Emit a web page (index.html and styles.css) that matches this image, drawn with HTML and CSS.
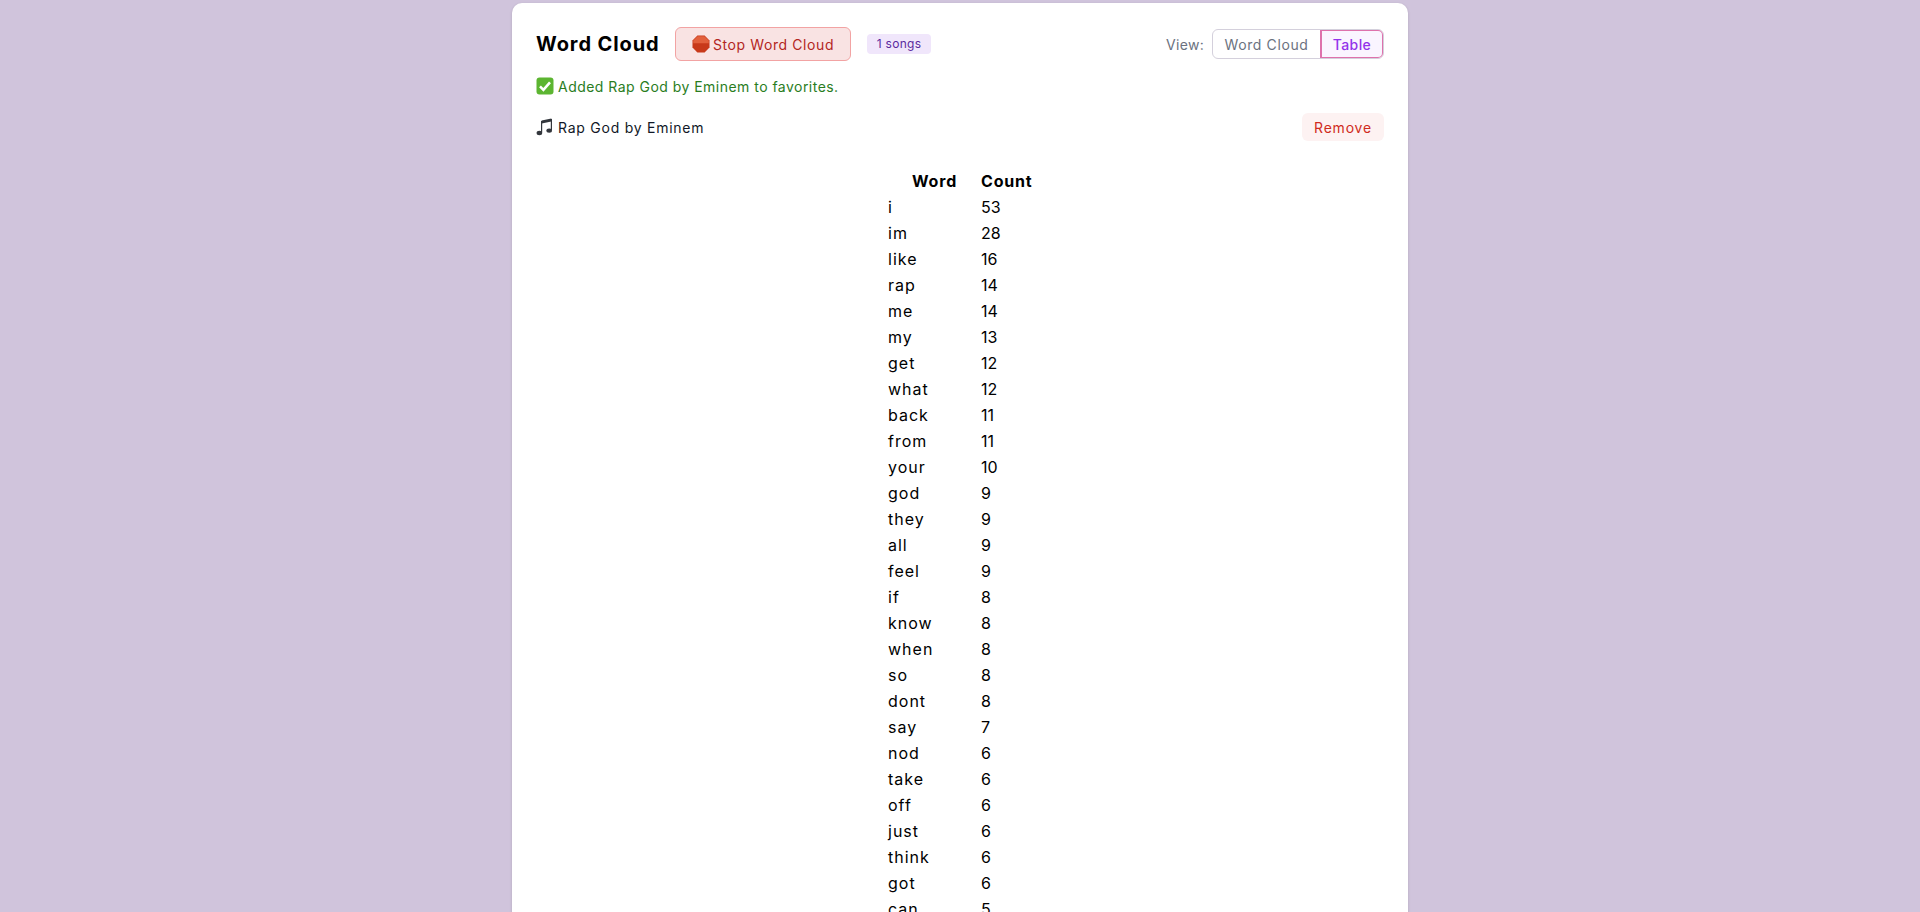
FILE: index.html
```html
<!DOCTYPE html>
<html lang="en">
<head>
    <meta charset="UTF-8">
    <meta name="viewport" content="width=device-width, initial-scale=1.0">
    <title>Word Cloud</title>
    <link rel="stylesheet" href="styles.css">
</head>
<body>
    <div class="card">
        <div class="header">
            <h2>Word Cloud</h2>
            <button class="stop-btn">
                <svg class="icon" viewBox="0 0 18 18" width="18" height="18" aria-hidden="true">
                    <polygon points="5.4,0.5 12.6,0.5 17.5,5.4 17.5,12.6 12.6,17.5 5.4,17.5 0.5,12.6 0.5,5.4" fill="#c8391a"/>
                    <path d="M5.6 1.2h6.8l4.4 4.4v2.6H1.2V5.6z" fill="#e2603c"/>
                </svg>
                Stop Word Cloud
            </button>
            <span class="badge">1 songs</span>
            <div class="view-switch">
                <span class="view-label">View:</span>
                <div class="toggle">
                    <button class="toggle-btn">Word Cloud</button>
                    <button class="toggle-btn active">Table</button>
                </div>
            </div>
        </div>

        <p class="message">
            <svg class="icon" viewBox="0 0 18 18" width="18" height="18" aria-hidden="true">
                <rect x="0.5" y="0.5" width="17" height="17" rx="3" fill="#5cb531"/>
                <path d="M4 9.4l3.4 3.4L14 5.4" fill="none" stroke="#fff" stroke-width="2.6"/>
            </svg>
            Added Rap God by Eminem to favorites.
        </p>

        <div class="fav-row">
            <span class="fav-title">
                <svg class="icon" viewBox="0 0 18 18" width="18" height="18" aria-hidden="true">
                    <path d="M5.6 2.6L15.4 0.6v3L5.6 5.6z" fill="#33373d"/>
                    <path d="M5.6 3v11.6M15.4 1v11" fill="none" stroke="#33373d" stroke-width="1.2"/>
                    <ellipse cx="3.4" cy="15" rx="2.8" ry="2.2" fill="#33373d"/>
                    <ellipse cx="13.2" cy="12.6" rx="2.8" ry="2.2" fill="#33373d"/>
                </svg>
                Rap God by Eminem
            </span>
            <button class="remove-btn">Remove</button>
        </div>

        <table class="word-table">
            <thead>
                <tr><th>Word</th><th>Count</th></tr>
            </thead>
            <tbody>
                <tr><td>i</td><td>53</td></tr>
                <tr><td>im</td><td>28</td></tr>
                <tr><td>like</td><td>16</td></tr>
                <tr><td>rap</td><td>14</td></tr>
                <tr><td>me</td><td>14</td></tr>
                <tr><td>my</td><td>13</td></tr>
                <tr><td>get</td><td>12</td></tr>
                <tr><td>what</td><td>12</td></tr>
                <tr><td>back</td><td>11</td></tr>
                <tr><td>from</td><td>11</td></tr>
                <tr><td>your</td><td>10</td></tr>
                <tr><td>god</td><td>9</td></tr>
                <tr><td>they</td><td>9</td></tr>
                <tr><td>all</td><td>9</td></tr>
                <tr><td>feel</td><td>9</td></tr>
                <tr><td>if</td><td>8</td></tr>
                <tr><td>know</td><td>8</td></tr>
                <tr><td>when</td><td>8</td></tr>
                <tr><td>so</td><td>8</td></tr>
                <tr><td>dont</td><td>8</td></tr>
                <tr><td>say</td><td>7</td></tr>
                <tr><td>nod</td><td>6</td></tr>
                <tr><td>take</td><td>6</td></tr>
                <tr><td>off</td><td>6</td></tr>
                <tr><td>just</td><td>6</td></tr>
                <tr><td>think</td><td>6</td></tr>
                <tr><td>got</td><td>6</td></tr>
                <tr><td>can</td><td>5</td></tr>
            </tbody>
        </table>
    </div>
</body>
</html>
```

FILE: styles.css
```css
html, body {
    height: 100%;
    overflow: hidden;
}
body {
    font-family: 'Inter', 'Noto Sans', sans-serif;
    background-color: #d0c4dc;
    color: #000;
    margin: 0;
    padding: 3px 0 0;
}
button {
    font-family: inherit;
    cursor: pointer;
}
.card {
    background: white;
    width: 848px;
    margin: 0 auto;
    padding: 24px;
    border-radius: 10px;
    box-shadow: 0 1px 3px rgba(0, 0, 0, 0.15);
}
.icon {
    flex-shrink: 0;
}
.header {
    display: flex;
    align-items: center;
    height: 34px;
}
h2 {
    margin: 0;
    font-size: 20px;
    font-weight: 700;
    letter-spacing: 0.9px;
    width: 139px;
}
.stop-btn {
    display: flex;
    align-items: center;
    justify-content: center;
    gap: 3px;
    width: 176px;
    height: 34px;
    padding: 0;
    background: #f9e3e3;
    color: #b3261e;
    border: 1px solid #f2a3a3;
    border-radius: 6px;
    font-size: 14px;
    letter-spacing: 0.6px;
}
.badge {
    margin-left: 16px;
    width: 64px;
    height: 20px;
    line-height: 20px;
    text-align: center;
    background: #f0e6fb;
    color: #5b2a9e;
    border-radius: 4px;
    font-size: 12px;
    letter-spacing: 0.3px;
}
.view-switch {
    margin-left: auto;
    display: flex;
    align-items: center;
    gap: 8px;
}
.view-label {
    color: #6b7280;
    font-size: 14px;
    letter-spacing: 0.3px;
}
.toggle {
    display: flex;
    height: 30px;
    border: 1px solid #d4d0dc;
    border-radius: 6px;
    box-sizing: border-box;
    width: 172px;
}
.toggle-btn {
    border: none;
    background: none;
    color: #6b7280;
    font-size: 14px;
    letter-spacing: 0.6px;
    padding: 0;
    flex: 1;
}
.toggle-btn.active {
    flex: 0 0 63px;
    background: #faf5ff;
    color: #9333ea;
    font-weight: 500;
    letter-spacing: 0.4px;
    border: solid #de72ac;
    border-width: 1px 1px 1px 2px;
    border-radius: 0 5px 5px 0;
}
.message {
    display: flex;
    align-items: center;
    gap: 4px;
    margin: 15px 0 0;
    height: 20px;
    color: #2a7d1e;
    font-size: 14px;
    letter-spacing: 0.47px;
}
.fav-row {
    display: flex;
    align-items: center;
    justify-content: space-between;
    margin-top: 17px;
    height: 28px;
}
.fav-title {
    display: flex;
    align-items: center;
    gap: 4px;
    color: #111827;
    font-size: 14px;
    letter-spacing: 0.75px;
}
.remove-btn {
    width: 82px;
    height: 28px;
    padding: 0;
    border: none;
    border-radius: 6px;
    background: #fdf2f2;
    color: #d02b20;
    font-size: 14px;
    letter-spacing: 0.8px;
}
.word-table {
    margin: 27px auto 0;
    width: 144px;
    table-layout: fixed;
    border-collapse: collapse;
    font-size: 16px;
}
.word-table th:first-child {
    width: 93px;
}
.word-table th {
    font-weight: 700;
    letter-spacing: 0.8px;
    padding: 0;
    height: 26px;
}
.word-table td {
    padding: 0;
    height: 26px;
}
.word-table td:first-child {
    letter-spacing: 1px;
}
```
